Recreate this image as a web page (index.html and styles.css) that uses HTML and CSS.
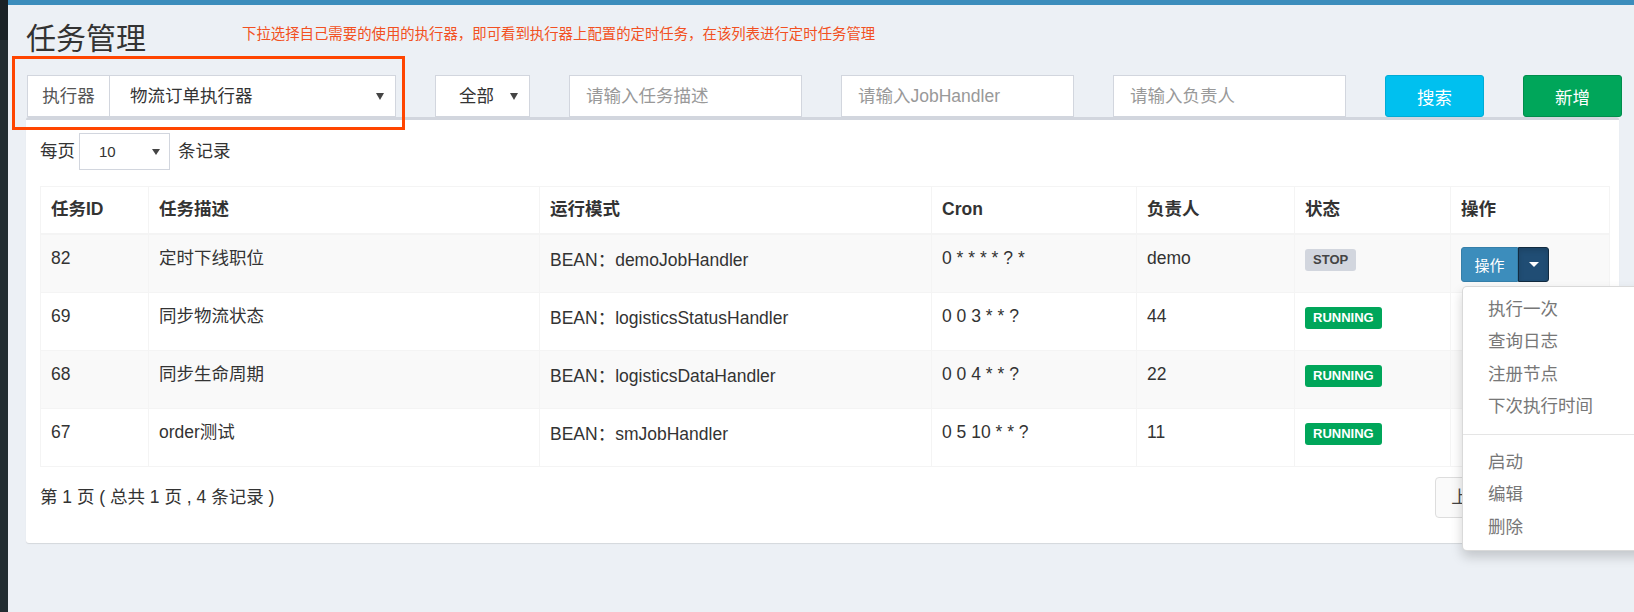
FILE: index.html
```html
<!DOCTYPE html>
<html lang="zh-CN">
<head>
    <meta charset="UTF-8">
    <title>任务管理</title>
    <link rel="stylesheet" href="styles.css">
</head>
<body>
    <div class="sidebar"></div>

    <div class="main">
        <div class="topbar"></div>

        <div class="content">
            <div class="content-header">
                <h1>任务管理</h1>
                <span class="tip">下拉选择自己需要的使用的执行器，即可看到执行器上配置的定时任务，在该列表进行定时任务管理</span>
            </div>

            <div class="filters">
                <div class="group executor">
                    <span class="addon">执行器</span>
                    <div class="select"><span>物流订单执行器</span><i class="caret"></i></div>
                </div>
                <div class="select status"><span>全部</span><i class="caret"></i></div>
                <input class="input" type="text" placeholder="请输入任务描述">
                <input class="input" type="text" placeholder="请输入JobHandler">
                <input class="input" type="text" placeholder="请输入负责人">
                <button class="btn btn-info">搜索</button>
                <button class="btn btn-success">新增</button>
                <div class="mark"></div>
            </div>

            <div class="box">
                <div class="length">
                    每页
                    <div class="select select-sm"><span>10</span><i class="caret"></i></div>
                    条记录
                </div>

                <table class="job-table">
                    <colgroup>
                        <col style="width:108px">
                        <col style="width:391px">
                        <col style="width:392px">
                        <col style="width:205px">
                        <col style="width:158px">
                        <col style="width:156px">
                        <col style="width:159px">
                    </colgroup>
                    <thead>
                        <tr>
                            <th>任务ID</th>
                            <th>任务描述</th>
                            <th>运行模式</th>
                            <th>Cron</th>
                            <th>负责人</th>
                            <th>状态</th>
                            <th>操作</th>
                        </tr>
                    </thead>
                    <tbody>
                        <tr>
                            <td>82</td>
                            <td>定时下线职位</td>
                            <td>BEAN<span class="colon">：</span>demoJobHandler</td>
                            <td>0 * * * * ? *</td>
                            <td>demo</td>
                            <td><span class="label label-stop">STOP</span></td>
                            <td>
                                <div class="btn-group">
                                    <button class="btn-op">操作</button>
                                    <button class="btn-toggle"><i class="caret caret-white"></i></button>
                                    <ul class="dropdown">
                                        <li>执行一次</li>
                                        <li>查询日志</li>
                                        <li>注册节点</li>
                                        <li>下次执行时间</li>
                                        <li class="divider"></li>
                                        <li>启动</li>
                                        <li>编辑</li>
                                        <li>删除</li>
                                    </ul>
                                </div>
                            </td>
                        </tr>
                        <tr>
                            <td>69</td>
                            <td>同步物流状态</td>
                            <td>BEAN<span class="colon">：</span>logisticsStatusHandler</td>
                            <td>0 0 3 * * ?</td>
                            <td>44</td>
                            <td><span class="label label-running">RUNNING</span></td>
                            <td></td>
                        </tr>
                        <tr>
                            <td>68</td>
                            <td>同步生命周期</td>
                            <td>BEAN<span class="colon">：</span>logisticsDataHandler</td>
                            <td>0 0 4 * * ?</td>
                            <td>22</td>
                            <td><span class="label label-running">RUNNING</span></td>
                            <td></td>
                        </tr>
                        <tr>
                            <td>67</td>
                            <td>order测试</td>
                            <td>BEAN<span class="colon">：</span>smJobHandler</td>
                            <td>0 5 10 * * ?</td>
                            <td>11</td>
                            <td><span class="label label-running">RUNNING</span></td>
                            <td></td>
                        </tr>
                    </tbody>
                </table>

                <div class="table-foot">
                    <div class="info">第 1 页 ( 总共 1 页 , 4 条记录 )</div>
                    <ul class="pagination">
                        <li>上页</li>
                        <li class="active">1</li>
                        <li>下页</li>
                    </ul>
                </div>
            </div>
        </div>
    </div>

    <div class="scroll-thumb"></div>
</body>
</html>
```

FILE: styles.css
```css
html, body {
    overflow: hidden;
}

body {
    margin: 0;
    padding: 0;
    display: flex;
    min-height: 612px;
    background-color: #ecf0f5;
    color: #333;
    font-family: "Liberation Sans", "Noto Sans CJK SC", sans-serif;
    font-size: 17.5px;
    line-height: 25px;
}

.sidebar {
    width: 8px;
    flex-shrink: 0;
    background: linear-gradient(#1a2226 0, #1a2226 40px, #222d32 40px);
}

.main {
    flex: 1;
    min-width: 0;
}

.topbar {
    height: 5px;
    background-color: #3c8dbc;
}

.content {
    padding: 0 15px 0 18px;
}

.content-header {
    display: flex;
    align-items: flex-start;
    margin-top: 17px;
}

.content-header h1 {
    margin: 0;
    font-size: 30px;
    font-weight: 400;
    line-height: 33px;
    color: #333;
}

.tip {
    margin-left: 96px;
    margin-top: 2px;
    font-size: 14.4px;
    line-height: 20px;
    color: #f25022;
}

/* filter bar */
.filters {
    position: relative;
    display: flex;
    gap: 39px;
    height: 42px;
    margin: 20px 0 0 1px;
}

.filters > * {
    flex-shrink: 0;
    box-sizing: border-box;
    height: 42px;
}

.group {
    display: flex;
}

.executor {
    width: 369px;
}

.addon {
    width: 83px;
    box-sizing: border-box;
    border: 1px solid #d2d6de;
    background: #fff;
    color: #555;
    text-align: center;
    line-height: 40px;
}

.select {
    display: flex;
    align-items: center;
    justify-content: space-between;
    box-sizing: border-box;
    border: 1px solid #d2d6de;
    background: #fff;
    color: #333;
    padding: 0 11px 0 20px;
}

.executor .select {
    flex: 1;
    border-left: none;
}

.status {
    width: 95px;
    padding-left: 23px;
}

.caret {
    display: inline-block;
    width: 0;
    height: 0;
    border-left: 4px solid transparent;
    border-right: 4px solid transparent;
    border-top: 7px solid #444;
}

.caret-white {
    border-top-color: #fff;
    border-left-width: 5px;
    border-right-width: 5px;
    border-top-width: 5px;
}

.input {
    width: 233px;
    border: 1px solid #d2d6de;
    padding: 0 16px;
    font-family: inherit;
    font-size: 17.5px;
    color: #555;
    outline: none;
}

.input::placeholder {
    color: #999;
}

.btn {
    width: 99px;
    border-radius: 3px;
    color: #fff;
    font-family: inherit;
    font-size: 17.5px;
    cursor: pointer;
}

.btn-info {
    background-color: #00c0ef;
    border: 1px solid #00acd6;
}

.btn-success {
    background-color: #00a65a;
    border: 1px solid #008d4c;
}

.filters .mark {
    position: absolute;
    left: -15px;
    top: -19px;
    width: 393px;
    height: 74px;
    border: 3px solid #ff4500;
    pointer-events: none;
}

/* list box */
.box {
    background: #fff;
    border-top: 3px solid #d2d6de;
    border-radius: 3px;
    box-shadow: 0 1px 1px rgba(0, 0, 0, 0.1);
    padding: 13px 10px 25px 14px;
}

.length {
    display: flex;
    align-items: center;
    height: 37px;
}

.select-sm {
    width: 91px;
    height: 37px;
    margin: 0 8px 0 4px;
    padding: 0 9px 0 19px;
    font-size: 15px;
}

.select-sm .caret {
    border-left-width: 4px;
    border-right-width: 4px;
    border-top-width: 6px;
}

.job-table {
    width: 1569px;
    margin-top: 16px;
    table-layout: fixed;
    border-collapse: collapse;
    border: 1px solid #f4f4f4;
}

.job-table th,
.job-table td {
    border: 1px solid #f4f4f4;
    text-align: left;
    vertical-align: top;
    white-space: nowrap;
}

.job-table th {
    height: 26px;
    padding: 10px 10px;
    border-bottom-width: 2px;
    font-weight: bold;
}

.job-table td {
    height: 46px;
    padding: 11px 10px 0;
}

.job-table tbody tr:nth-child(odd) {
    background-color: #f9f9f9;
}

.colon {
    font-family: "Noto Sans CJK TC", sans-serif;
}

.label {
    display: inline-block;
    margin-top: 3px;
    padding: 3px 8px;
    border-radius: 3px;
    font-size: 13px;
    font-weight: bold;
    line-height: 16px;
}

.label-stop {
    background-color: #d2d6de;
    color: #444;
}

.label-running {
    background-color: #00a65a;
    color: #fff;
}

.btn-group {
    position: relative;
    display: inline-flex;
    margin-top: 1px;
}

.btn-op,
.btn-toggle {
    height: 35px;
    font-family: inherit;
    font-size: 15px;
    color: #fff;
    cursor: pointer;
}

.btn-op {
    width: 57px;
    background-color: #3c8dbc;
    border: 1px solid #367fa9;
    border-radius: 3px 0 0 3px;
}

.btn-toggle {
    width: 31px;
    display: flex;
    align-items: center;
    justify-content: center;
    background-color: #204d74;
    border: 1px solid #122b40;
    border-radius: 0 3px 3px 0;
    box-shadow: inset 0 3px 5px rgba(0, 0, 0, 0.125);
}

.dropdown {
    position: absolute;
    top: 100%;
    left: 1px;
    z-index: 10;
    min-width: 200px;
    margin: 4px 0 0;
    padding: 6px 0;
    list-style: none;
    background: #fff;
    border: 1px solid rgba(0, 0, 0, 0.15);
    border-radius: 5px;
    box-shadow: 0 6px 12px rgba(0, 0, 0, 0.175);
}

.dropdown li {
    padding: 3.75px 25px;
    line-height: 25px;
    color: #777;
}

.dropdown .divider {
    height: 1px;
    padding: 0;
    margin: 11px 0;
    background-color: #e5e5e5;
}

.table-foot {
    display: flex;
    align-items: center;
    justify-content: space-between;
    margin-top: 10px;
}

.pagination {
    display: flex;
    margin: 0;
    padding: 0;
    list-style: none;
}

.pagination li {
    padding: 7px 15px;
    margin-left: -1px;
    border: 1px solid #ddd;
    background: #fafafa;
    color: #444;
}

.pagination li:first-child {
    border-radius: 4px 0 0 4px;
}

.pagination li:last-child {
    border-radius: 0 4px 4px 0;
}

.pagination .active {
    background: #337ab7;
    border-color: #337ab7;
    color: #fff;
}

.scroll-thumb {
    position: absolute;
    top: 463px;
    right: 0;
    width: 5px;
    height: 59px;
    background-color: #50555d;
    border-radius: 3px 0 0 3px;
}
```
